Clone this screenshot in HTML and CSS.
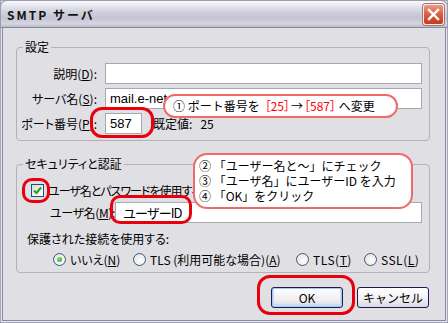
FILE: index.html
```html
<!DOCTYPE html>
<html lang="ja">
<head>
<meta charset="utf-8">
<link rel="stylesheet" href="styles.css">
</head>
<body>
<div class="window">
  <div class="titlebar">
    <span class="title">SMTP サーバ</span>
    <span class="close"><svg width="13" height="13" viewBox="0 0 13 13"><path d="M2 2 L11 11 M11 2 L2 11" stroke="#fff" stroke-width="2.4" stroke-linecap="square"/></svg></span>
  </div>
  <div class="client">
    <div class="group g1">
      <div class="legend">設定</div>
      <div class="form">
        <label class="lbl">説明(<u>D</u>):</label>
        <div class="input"></div>
        <label class="lbl">サーバ名(<u>S</u>):</label>
        <div class="input">mail.e-net.ne.jp</div>
        <label class="lbl">ポート番号(<u>P</u>):</label>
        <div class="port-row"><div class="input port">587</div><span class="default">既定値:&nbsp;&nbsp;&nbsp;25</span></div>
      </div>
    </div>
    <div class="group g2">
      <div class="legend">セキュリティと認証</div>
      <div class="check-row">
        <span class="checkbox"><svg width="9" height="9" viewBox="0 0 9 9"><path d="M1 4.5 L3.5 7 L8 1.5" fill="none" stroke="#21a121" stroke-width="2"/></svg></span>
        <span class="check-label">ユーザ名とパスワードを使用する(<u>U</u>)</span>
      </div>
      <div class="user-row">
        <label class="lbl2">ユーザ名(<u>M</u>):</label>
        <div class="input user">ユーザーID</div>
      </div>
      <div class="protect">保護された接続を使用する:</div>
      <div class="radios">
        <span class="radio on"></span><span class="rlabel r1">いいえ(<u>N</u>)</span>
        <span class="radio"></span><span class="rlabel r2">TLS (利用可能な場合)(<u>A</u>)</span>
        <span class="radio"></span><span class="rlabel r3">TLS(<u>T</u>)</span>
        <span class="radio"></span><span class="rlabel r4">SSL(<u>L</u>)</span>
      </div>
    </div>
    <div class="buttons">
      <button class="btn default-btn">OK</button>
      <button class="btn">キャンセル</button>
    </div>
  </div>

  <div class="mark m-port"></div>
  <div class="mark m-check"></div>
  <div class="mark m-user"></div>
  <div class="mark m-ok"></div>
  <div class="callout c1">① ポート番号を<span class="red first">［25］</span><span class="arrow">→</span><span class="red">［587］</span> へ変更</div>
  <div class="callout c2">
    <div>② 「ユーザー名と～」にチェック</div>
    <div>③ 「ユーザ名」にユーザーID を入力</div>
    <div>④ 「OK」をクリック</div>
  </div>
</div>
</body>
</html>
```
FILE: styles.css
```css
* { box-sizing: border-box; }
body {
  margin: 0;
  background: #fff;
  font-family: "Liberation Sans", "Noto Sans CJK JP", sans-serif;
  font-size: 12px;
  color: #000;
}
.window {
  position: relative;
  width: 448px;
  height: 323px;
  background: #e0dfe3;
  box-shadow: inset 0 0 0 1px #a5a5b8, inset 0 0 0 2px #e6e6ee, inset 0 0 0 3px #8a8aa4;
  overflow: hidden;
  font-feature-settings: "palt";
}
.titlebar {
  height: 28px;
  border-radius: 7px 7px 0 0;
  background: linear-gradient(#fafafc 0%, #e6e6ee 18%, #cfcfdc 45%, #c4c4d4 65%, #d6d6e2 88%, #b8b8c8 100%);
  border: 1px solid #9c9cb0;
  border-bottom: 1px solid #8a8aa0;
  display: flex;
  align-items: center;
  justify-content: space-between;
  padding: 0 3px 0 6px;
}
.title {
  font-family: "Noto Sans CJK JP", sans-serif;
  font-feature-settings: normal;
  font-weight: bold;
  font-size: 12px;
  letter-spacing: 2px;
  color: #111;
}
.close {
  width: 21px;
  height: 21px;
  border-radius: 3px;
  border: 1px solid #f4f0f0;
  background: linear-gradient(#ec9a86, #d85c42 50%, #c23c22);
  display: flex;
  align-items: center;
  justify-content: center;
  box-shadow: 0 0 0 1px #b07070;
}
.client {
  padding: 19px 18px 0 16px;
}
.group {
  border: 1px solid #b2b1b8;
  border-radius: 4px;
}
.legend {
  display: block;
  width: max-content;
  height: 14px;
  line-height: 14px;
  margin: -8px 0 -6px 6px;
  padding: 0 2px;
  background: #e0dfe3;
  font-family: "Noto Sans CJK JP", sans-serif;
}
.g1 {
  padding: 0 7px 5px 0;
  height: 94px;
}
.g1 .legend { margin-bottom: 9px; }
.form {
  display: grid;
  grid-template-columns: 80px 1fr;
  column-gap: 8px;
  row-gap: 4px;
}
.lbl, .lbl2 {
  text-align: right;
  line-height: 21px;
  white-space: nowrap;
  font-family: "Noto Sans CJK JP", sans-serif;
}
.input {
  height: 21px;
  background: #fff;
  border: 1px solid #a4a9b2;
  line-height: 19px;
  padding-left: 4px;
  font-size: 13px;
}
.port-row {
  display: flex;
  align-items: center;
  gap: 11px;
}
.port { width: 37px; }
.default { font-family: "Noto Sans CJK JP", sans-serif; }
.g2 {
  margin-top: 23px;
  height: 109px;
  padding: 0 7px 0 0;
}
.check-row {
  display: flex;
  align-items: center;
  gap: 4px;
  margin: 18px 0 0 14px;
  height: 14px;
  font-family: "Noto Sans CJK JP", sans-serif;
  white-space: nowrap;
}
.check-label { letter-spacing: -1px; }
.checkbox {
  width: 13px;
  height: 13px;
  border: 1px solid #1c5180;
  background: linear-gradient(135deg, #dcdcd6, #fff);
  display: flex;
  align-items: center;
  justify-content: center;
  flex: none;
}
.user-row {
  display: flex;
  align-items: center;
  margin: 5px 0 0 33px;
  gap: 3px;
}
.lbl2 { width: 62px; letter-spacing: -0.4px; }
.user {
  flex: 1;
  font-family: "Noto Sans CJK JP", sans-serif;
  font-feature-settings: normal;
  font-size: 13px;
  letter-spacing: -1px;
  padding-left: 7px;
}
.protect {
  margin: 8px 0 0 10px;
  font-family: "Noto Sans CJK JP", sans-serif;
  line-height: 16px;
}
.radios {
  display: flex;
  align-items: center;
  margin: 4px 0 0 36px;
  height: 16px;
  font-family: "Noto Sans CJK JP", sans-serif;
  white-space: nowrap;
}
.radio {
  width: 13px;
  height: 13px;
  border-radius: 50%;
  border: 1px solid #3c5a80;
  background: radial-gradient(circle at 60% 60%, #fff, #dcdcd6);
  display: inline-flex;
  align-items: center;
  justify-content: center;
  margin-right: 4px;
  flex: none;
}
.radio.on::after {
  content: "";
  width: 5px;
  height: 5px;
  border-radius: 50%;
  background: radial-gradient(circle at 40% 40%, #7ee27e, #21a121);
}
.rlabel { margin-right: 17px; }
.r1 { width: 46px; }
.r2 { width: 129px; }
.r3 { width: 34px; letter-spacing: 0.5px; }
.r4 { width: 36px; letter-spacing: 0.5px; }
.buttons {
  display: flex;
  justify-content: flex-end;
  gap: 14px;
  margin-top: 14px;
  padding-right: 1px;
}
.btn {
  width: 72px;
  height: 21px;
  border: 1px solid #1c1c50;
  border-radius: 3px;
  background: linear-gradient(#ffffff, #f0f0f4 60%, #d6d6e0);
  font-family: "Noto Sans CJK JP", sans-serif;
  font-size: 12px;
  padding: 0;
  color: #000;
}
.default-btn {
  box-shadow: inset 0 0 0 1px #a8c8f0, inset 0 -1px 0 2px #c8dcf4;
}
.mark {
  position: absolute;
  border: 3px solid #e8000c;
  border-radius: 12px;
}
.m-port { left: 90px; top: 107px; width: 64px; height: 31px; }
.m-check { left: 22px; top: 178px; width: 28px; height: 25px; border-radius: 10px; }
.m-user { left: 110px; top: 195px; width: 82px; height: 29px; border-radius: 10px; }
.m-ok { left: 257px; top: 275px; width: 98px; height: 40px; border-radius: 13px; }
.callout {
  position: absolute;
  background: #fff;
  border: 2px solid #f06a6a;
  font-family: "Noto Sans CJK JP", sans-serif;
  font-feature-settings: normal;
  font-size: 12px;
  white-space: nowrap;
}
.c1 {
  left: 163px; top: 94px; width: 235px; height: 24px;
  border-radius: 12px;
  padding-left: 8px;
  line-height: 20px;
}
.c2 {
  left: 193px; top: 153px; width: 220px; height: 56px;
  border-radius: 14px;
  padding: 3px 0 0 4px;
  line-height: 15px;
}
.red { color: #f00; font-feature-settings: "palt"; }
.red.first { margin-left: 5px; }
.arrow { margin: 0 1px; }
```
